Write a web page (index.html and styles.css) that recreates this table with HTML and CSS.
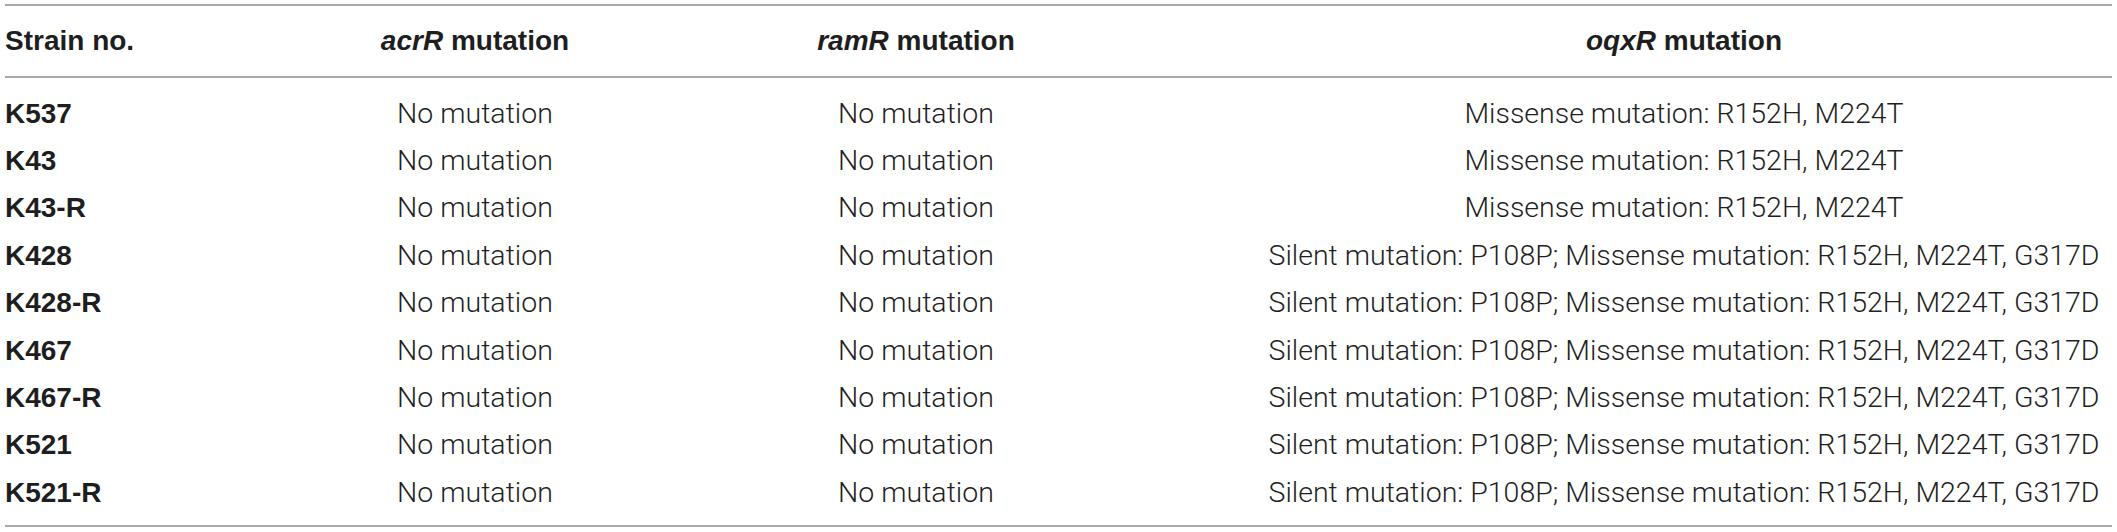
FILE: index.html
```html
<!DOCTYPE html>
<html lang="en">
<head>
<meta charset="utf-8">
<title>Mutations</title>
<link rel="stylesheet" href="styles.css">
</head>
<body>
<div class="table">
  <div class="row head">
    <div class="cell first">Strain no.</div>
    <div class="cell"><i>acrR</i> mutation</div>
    <div class="cell"><i>ramR</i> mutation</div>
    <div class="cell"><i>oqxR</i> mutation</div>
  </div>
  <div class="body">
    <div class="row"><div class="cell first">K537</div><div class="cell">No mutation</div><div class="cell">No mutation</div><div class="cell">Missense mutation: R152H, M224T</div></div>
    <div class="row"><div class="cell first">K43</div><div class="cell">No mutation</div><div class="cell">No mutation</div><div class="cell">Missense mutation: R152H, M224T</div></div>
    <div class="row"><div class="cell first">K43-R</div><div class="cell">No mutation</div><div class="cell">No mutation</div><div class="cell">Missense mutation: R152H, M224T</div></div>
    <div class="row"><div class="cell first">K428</div><div class="cell">No mutation</div><div class="cell">No mutation</div><div class="cell">Silent mutation: P108P; Missense mutation: R152H, M224T, G317D</div></div>
    <div class="row"><div class="cell first">K428-R</div><div class="cell">No mutation</div><div class="cell">No mutation</div><div class="cell">Silent mutation: P108P; Missense mutation: R152H, M224T, G317D</div></div>
    <div class="row"><div class="cell first">K467</div><div class="cell">No mutation</div><div class="cell">No mutation</div><div class="cell">Silent mutation: P108P; Missense mutation: R152H, M224T, G317D</div></div>
    <div class="row"><div class="cell first">K467-R</div><div class="cell">No mutation</div><div class="cell">No mutation</div><div class="cell">Silent mutation: P108P; Missense mutation: R152H, M224T, G317D</div></div>
    <div class="row"><div class="cell first">K521</div><div class="cell">No mutation</div><div class="cell">No mutation</div><div class="cell">Silent mutation: P108P; Missense mutation: R152H, M224T, G317D</div></div>
    <div class="row"><div class="cell first">K521-R</div><div class="cell">No mutation</div><div class="cell">No mutation</div><div class="cell">Silent mutation: P108P; Missense mutation: R152H, M224T, G317D</div></div>
  </div>
</div>
</body>
</html>
```

FILE: styles.css
```css
html, body {
  margin: 0;
  padding: 0;
  background: #ffffff;
}

body {
  font-family: "Liberation Sans", Arial, sans-serif;
  font-size: 28px;
  color: #2b2b2b;
}

.table {
  margin: 4px 0 0 5px;
  width: 2107px;
  border-top: 2px solid #a9a9a9;
  border-bottom: 2px solid #a9a9a9;
}

.row {
  display: grid;
  grid-template-columns: 369px 202px 680px 856px;
}

.cell {
  text-align: center;
  white-space: nowrap;
}

.body .cell {
  font-family: Roboto, "Liberation Sans", sans-serif;
  font-weight: 300;
  font-size: 28.5px;
  color: #1f1f1f;
}

.cell.first,
.body .cell.first {
  text-align: left;
  font-family: "Liberation Sans", Arial, sans-serif;
  font-size: 28px;
  font-weight: bold;
  color: #1e1e1e;
}

.head {
  height: 70px;
  line-height: 70px;
  border-bottom: 2px solid #a9a9a9;
  font-weight: bold;
  color: #1e1e1e;
}

.head i {
  font-style: italic;
}

.body {
  padding: 11.6px 0 9px;
}

.body .row {
  height: 47.4px;
  line-height: 47.4px;
}
```
